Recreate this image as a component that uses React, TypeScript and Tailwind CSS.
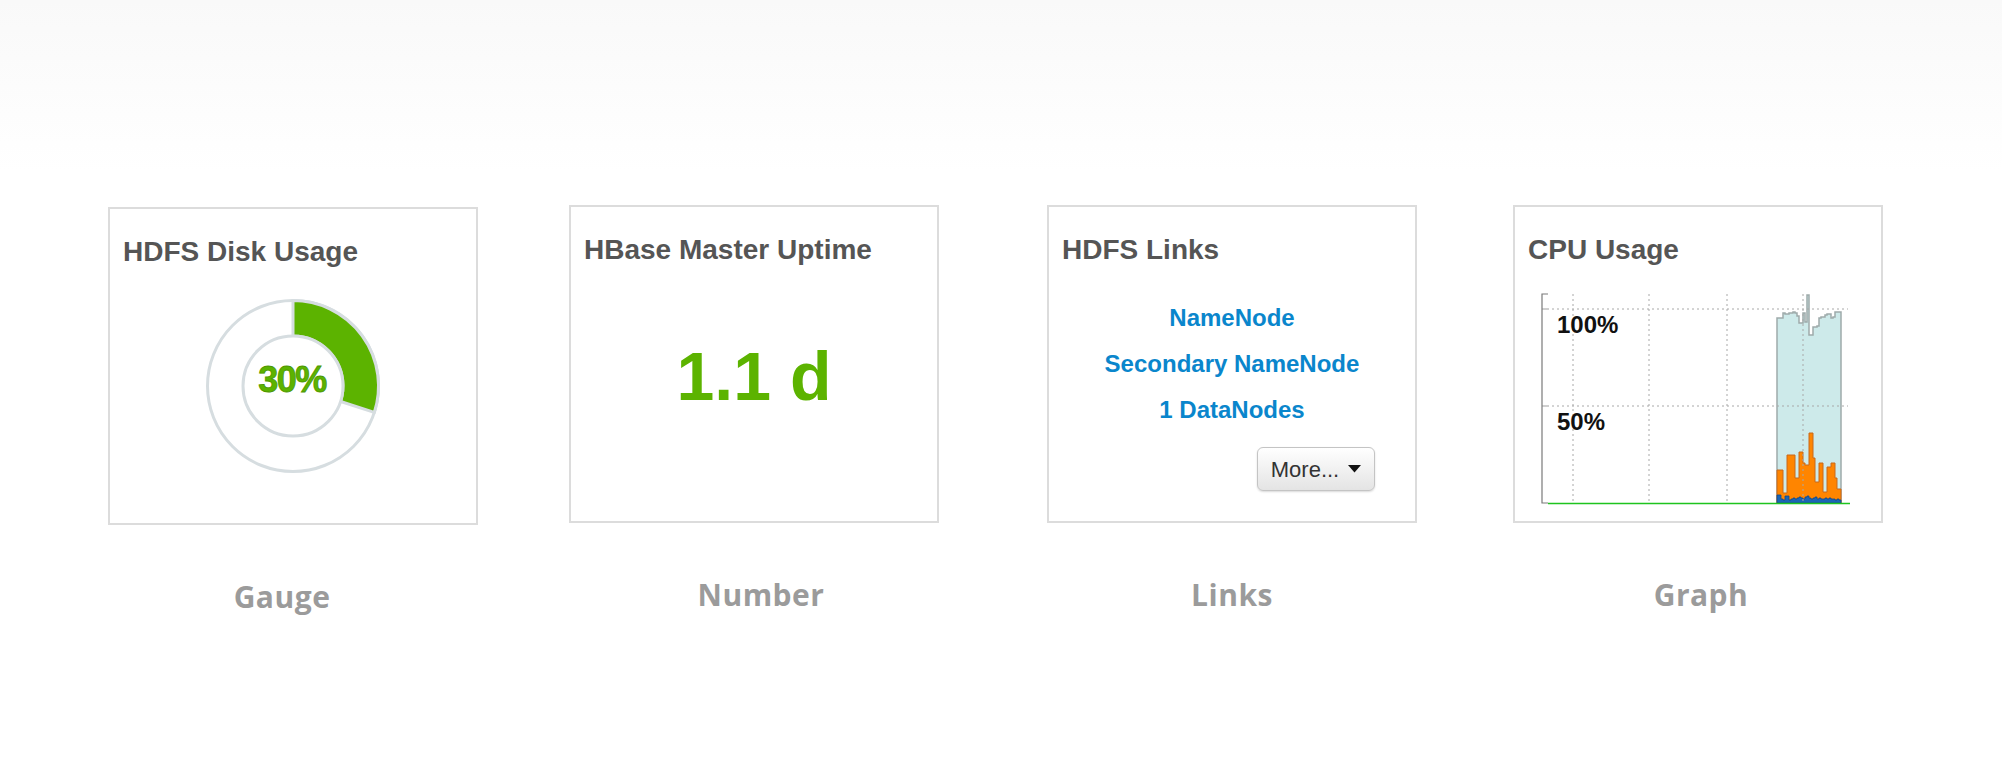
import React from 'react'

const GREEN = '#5cb300'

function Card({
  title,
  className = '',
  children,
}: {
  title: string
  className?: string
  children?: React.ReactNode
}) {
  return (
    <div
      className={`w-[370px] h-[318px] border-2 border-[#dcdcdc] bg-white pl-[13px] pt-[27px] flex flex-col ${className}`}
    >
      <h3 className="text-[28px] leading-[32px] font-bold text-[#555555]">{title}</h3>
      {children}
    </div>
  )
}

function Gauge({ percent }: { percent: number }) {
  const cx = 90
  const cy = 90
  const R = 85.5
  const r = 50
  const a0 = -Math.PI / 2
  const a1 = a0 + (percent / 100) * Math.PI * 2
  const p = (rad: number, a: number) => `${cx + rad * Math.cos(a)} ${cy + rad * Math.sin(a)}`
  const large = percent > 50 ? 1 : 0
  const sector = `M${p(R, a0)} A${R} ${R} 0 ${large} 1 ${p(R, a1)} L${p(r, a1)} A${r} ${r} 0 ${large} 0 ${p(r, a0)} Z`

  return (
    <svg width="180" height="180" viewBox="0 0 180 180">
      <circle cx={cx} cy={cy} r={R} fill="#fff" stroke="#d6dde0" strokeWidth="3" />
      <path d={sector} fill={GREEN} stroke="#d6dde0" strokeWidth="3" strokeLinejoin="miter" />
      <circle cx={cx} cy={cy} r={r} fill="#fff" stroke="#d6dde0" strokeWidth="3" />
      <text
        x={cx - 1}
        y="96"
        textAnchor="middle"
        fontSize="36"
        fontWeight="bold"
        fill={GREEN}
        stroke="#4c9600"
        strokeWidth="0.8"
        fontFamily="'Liberation Sans', Arial, sans-serif"
        letterSpacing="-1.5"
      >
        {percent}%
      </text>
    </svg>
  )
}

// step series, 2px per sample, starting at x=237 in chart space
const total = [28, 28, 28, 23, 24, 24, 23, 23, 22, 23, 26, 33, 33, 23, 32, 5, 45, 45, 37, 37, 36, 28, 27, 27, 25, 24, 24, 28, 27, 22, 22, 22]
const user = [180, 180, 180, 203, 203, 165, 165, 165, 165, 188, 188, 162, 162, 173, 175, 175, 143, 143, 168, 192, 192, 173, 173, 202, 202, 177, 177, 173, 173, 188, 199, 199]
const sys = [205, 205, 209, 210, 206, 206, 210, 209, 208, 209, 208, 207, 208, 209, 207, 206, 208, 209, 208, 207, 209, 208, 209, 209, 208, 209, 208, 209, 209, 210, 209, 210]

const stepPath = (values: number[], x0: number, dx: number, base: number) => {
  let d = `M${x0} ${base}`
  values.forEach((v, i) => {
    d += ` L${x0 + i * dx} ${v} L${x0 + (i + 1) * dx} ${v}`
  })
  d += ` L${x0 + values.length * dx} ${base} Z`
  return d
}

function CpuChart() {
  const base = 213
  const vLines = [33, 109, 187, 263]
  return (
    <svg width="312" height="216" viewBox="0 0 312 216" className="ml-[12px] mt-[24px]">
      <path d={stepPath(total, 237, 2, base)} fill="#cdeaea" stroke="#9eabab" strokeWidth="1.5" />
      <path d={stepPath(user, 237, 2, base)} fill="#ff8500" stroke="#c8681a" strokeWidth="1" />
      <path d={stepPath(sys, 237, 2, base)} fill="#1b65b5" stroke="#0f4a8a" strokeWidth="0.8" />

      {vLines.map((x) => (
        <line key={x} x1={x} y1="4" x2={x} y2={base} stroke="#a8a8a8" strokeWidth="1" strokeDasharray="2 3" />
      ))}
      <line x1="2" y1="19" x2="308" y2="19" stroke="#a8a8a8" strokeWidth="1" strokeDasharray="2 3" />
      <line x1="2" y1="116" x2="308" y2="116" stroke="#a8a8a8" strokeWidth="1" strokeDasharray="2 3" />
      <line x1="2" y1="19" x2="9" y2="19" stroke="#cfcfcf" strokeWidth="2" />
      <line x1="2" y1="116" x2="9" y2="116" stroke="#cfcfcf" strokeWidth="2" />

      <path d="M8 4 L2 4 L2 213 L8 213" fill="none" stroke="#7a7a7a" strokeWidth="1.2" />
      <line x1="8" y1="213.5" x2="310" y2="213.5" stroke="#1ec41e" strokeWidth="1.5" />

      <text x="17" y="43" fontSize="24" fontWeight="bold" fill="#111" fontFamily="'Liberation Sans', Arial, sans-serif">
        100%
      </text>
      <text x="17" y="140" fontSize="24" fontWeight="bold" fill="#111" fontFamily="'Liberation Sans', Arial, sans-serif">
        50%
      </text>
    </svg>
  )
}

function Label({ text, className = '' }: { text: string; className?: string }) {
  return (
    <div className={`mt-[53px] text-[30px] leading-[38px] font-bold tracking-[0.5px] text-[#9b9b9b] font-['Open_Sans',sans-serif] ${className}`}>
      {text}
    </div>
  )
}

export default function App() {
  return (
    <div className="w-full h-[780px] bg-gradient-to-b from-[#f9f9f9] to-white to-[22%] font-['Liberation_Sans',Arial,sans-serif] overflow-hidden">
      <div className="flex pt-[205px] pl-[108px]">
        {/* Gauge */}
        <div className="w-[370px] flex flex-col items-center">
          <Card title="HDFS Disk Usage" className="mt-[2px]">
            <div className="mt-[28px] pr-[13px] flex justify-center">
              <Gauge percent={30} />
            </div>
          </Card>
          <Label text="Gauge" className="mr-[22px] -mt-[2px]" />
        </div>

        {/* Number */}
        <div className="w-[370px] ml-[91px] flex flex-col items-center">
          <Card title="HBase Master Uptime">
            <div className="mt-[71px] pr-[13px] text-center text-[68px] leading-[78px] font-bold text-[#5cb300]">
              1.1 d
            </div>
          </Card>
          <Label text="Number" className="ml-[14px]" />
        </div>

        {/* Links */}
        <div className="w-[370px] ml-[108px] flex flex-col items-center">
          <Card title="HDFS Links">
            <div className="mt-[29px] pr-[13px] flex flex-col items-center text-[24px] leading-[46px] font-bold text-[#0a86cc]">
              <a href="#">NameNode</a>
              <a href="#">Secondary NameNode</a>
              <a href="#">1 DataNodes</a>
            </div>
            <button className="self-end mr-[40px] mt-[14px] w-[118px] h-[44px] rounded-[6px] border border-[#c4c4c4] bg-gradient-to-b from-white to-[#e4e4e4] shadow-[0_1px_2px_rgba(0,0,0,0.15)] flex items-center justify-center gap-[9px] text-[22px] text-[#333]">
              <span>More...</span>
              <svg width="13" height="8" viewBox="0 0 13 8">
                <path d="M0 0 L13 0 L6.5 7.5 Z" fill="#111" />
              </svg>
            </button>
          </Card>
          <Label text="Links" />
        </div>

        {/* Graph */}
        <div className="w-[370px] ml-[96px] flex flex-col items-center">
          <Card title="CPU Usage">
            <CpuChart />
          </Card>
          <Label text="Graph" className="ml-[6px]" />
        </div>
      </div>
    </div>
  )
}
